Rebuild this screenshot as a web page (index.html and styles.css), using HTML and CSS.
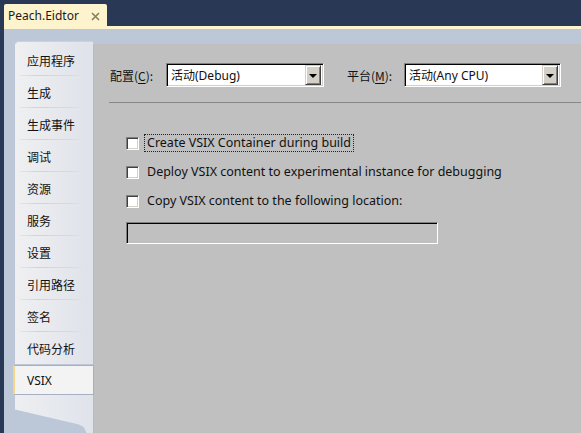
FILE: index.html
```html
<!DOCTYPE html>
<html>
<head>
<meta charset="utf-8">
<link rel="stylesheet" href="styles.css">
</head>
<body>
<div class="window">
  <div class="tabbar">
    <div class="doctab">
      <span class="tab-title">Peach.Eidtor</span>
      <svg class="tab-close" width="9" height="9" viewBox="0 0 9 9"><path d="M1 1 L8 8 M8 1 L1 8" stroke="#8b7d5e" stroke-width="1.6" fill="none"/></svg>
    </div>
  </div>
  <div class="tabline"></div>
  <div class="workspace">
    <nav class="side">
      <div class="side-top"></div>
      <ul class="side-items">
        <li class="side-item">应用程序</li>
        <li class="side-item">生成</li>
        <li class="side-item">生成事件</li>
        <li class="side-item">调试</li>
        <li class="side-item">资源</li>
        <li class="side-item">服务</li>
        <li class="side-item">设置</li>
        <li class="side-item">引用路径</li>
        <li class="side-item">签名</li>
        <li class="side-item">代码分析</li>
        <li class="side-item selected">VSIX</li>
      </ul>
      <div class="side-rest"></div>
      <div class="side-tail"></div>
    </nav>
    <main class="page">
      <div class="config-row">
        <span class="field-label lbl-config">配置(<u>C</u>):</span>
        <div class="combo combo-config">
          <span class="combo-text">活动(Debug)</span>
          <span class="combo-btn"><span class="arrow"></span></span>
        </div>
        <span class="field-label lbl-platform">平台(<u>M</u>):</span>
        <div class="combo combo-platform">
          <span class="combo-text">活动(Any CPU)</span>
          <span class="combo-btn"><span class="arrow"></span></span>
        </div>
      </div>
      <div class="sep"></div>
      <div class="checks">
        <label class="check-row"><span class="box"></span><span class="check-text focused">Create VSIX Container during build</span></label>
        <label class="check-row"><span class="box"></span><span class="check-text">Deploy VSIX content to experimental instance for debugging</span></label>
        <label class="check-row"><span class="box"></span><span class="check-text">Copy VSIX content to the following location:</span></label>
      </div>
      <div class="textbox"></div>
    </main>
  </div>
</div>
</body>
</html>
```

FILE: styles.css
```css
* { box-sizing: border-box; }
html, body { margin: 0; padding: 0; }
body {
  width: 581px;
  height: 433px;
  overflow: hidden;
  background: #293955;
  font-family: "Noto Sans", "Noto Sans CJK SC", sans-serif;
  font-size: 12px;
  color: #000;
}
.window {
  margin-left: 4px;
  height: 433px;
  display: flex;
  flex-direction: column;
}
.tabbar {
  height: 26px;
  padding-top: 4px;
  display: flex;
}
.doctab {
  width: 103px;
  height: 22px;
  background: #fdf3cd;
  border-radius: 2px 2px 0 0;
  display: flex;
  align-items: center;
  padding-left: 4px;
  padding-top: 1px;
}
.tab-title {
  font-family: "Noto Sans", sans-serif;
  font-size: 12px;
  color: #1b1b1b;
  flex: 1;
}
.tab-close { margin-right: 7px; margin-top: 2px; }
.tabline {
  height: 3px;
  background: #fdf3cd;
}
.workspace {
  flex: 1;
  background: #bcc7d8;
  display: flex;
  padding-top: 12px;
  padding-left: 11px;
}
.side {
  width: 78px;
  display: flex;
  flex-direction: column;
  position: relative;
}
.side-top {
  height: 3px;
  border-radius: 4px 0 0 0;
  background: linear-gradient(to right, #eeeff2, #dfe3ea);
  border-top: 1px solid #ccd2dc;
  border-left: 1px solid #ccd2dc;
}
.side-items {
  list-style: none;
  margin: 0;
  padding: 0;
}
.side-item {
  height: 32px;
  padding-left: 12px;
  display: flex;
  align-items: center;
  font-family: "Noto Sans CJK SC", sans-serif;
  font-size: 12px;
  color: #111;
  background: linear-gradient(to right, #f0f0f2, #dee2e9);
  position: relative;
}
.side-item::after {
  content: "";
  position: absolute;
  left: 4px;
  right: 8px;
  bottom: 0;
  height: 1px;
  background: linear-gradient(to right, rgba(205,208,214,0.3), #cfd3da 30%, #d6dae1 80%, rgba(220,224,232,0));
}
.side-item:nth-child(10)::after { display: none; }
.side-item.selected {
  margin-left: -2px;
  margin-right: -1px;
  margin-top: 1px;
  height: 30px;
  background: #f3f3f3;
  border: 1px solid #a7b0c0;
  border-left: 2px solid #f3d58c;
  padding-left: 12px;
  font-family: "Noto Sans", sans-serif;
  font-size: 12px;
}
.side-item.selected::after { display: none; }
.side-rest {
  height: 8px;
  background: linear-gradient(to right, #eeeff2, #dfe3ea);
}
.side-tail {
  flex: 1;
  background: linear-gradient(to right, #eeeff2, #dfe3ea);
  clip-path: polygon(0 0, 100% 0, 100% 100%, 92% 100%, 88% 80%, 82% 72%, 0 22%);
}
.page {
  flex: 1;
  margin-top: 3px;
  background: #c0c0c0;
  padding-left: 15px;
  border-left: 1px solid #b4bcc8;
}
.config-row {
  margin-top: 19px;
  height: 24px;
  display: flex;
  align-items: center;
}
.field-label {
  font-family: "Noto Sans CJK SC", sans-serif;
  font-size: 12px;
  color: #111;
}
.field-label u { text-decoration-thickness: 1px; text-underline-offset: 2px; }
.lbl-config { width: 57px; padding-left: 1px; }
.lbl-platform { width: 57px; margin-left: 23px; }
.combo {
  height: 24px;
  background: #fff;
  border: 1px solid;
  border-color: #808080 #ffffff #ffffff #808080;
  box-shadow: inset 1px 1px 0 #000, inset -1px -1px 0 #d4d0c8;
  display: flex;
  align-items: center;
  padding: 2px;
}
.combo-config { width: 158px; }
.combo-platform { width: 157px; }
.combo-text {
  flex: 1;
  padding-left: 2px;
  font-family: "Noto Sans", "Noto Sans CJK SC", sans-serif;
  font-size: 12px;
  color: #111;
}
.combo-btn {
  width: 16px;
  height: 20px;
  background: #d4d0c8;
  border: 1px solid;
  border-color: #d4d0c8 #404040 #404040 #d4d0c8;
  box-shadow: inset 1px 1px 0 #fff, inset -1px -1px 0 #808080;
  display: flex;
  align-items: center;
  justify-content: center;
}
.arrow {
  width: 0;
  height: 0;
  border-left: 4px solid transparent;
  border-right: 4px solid transparent;
  border-top: 4px solid #000;
  margin-top: 1px;
}
.sep {
  margin-top: 15px;
  height: 1px;
  background: #878787;
}
.checks {
  margin-top: 31px;
  padding-left: 17px;
  display: flex;
  flex-direction: column;
  gap: 11px;
}
.check-row {
  height: 18px;
  display: flex;
  align-items: center;
}
.box {
  width: 13px;
  height: 13px;
  background: #fff;
  border: 1px solid;
  border-color: #808080 #ffffff #ffffff #808080;
  box-shadow: inset 1px 1px 0 #404040, inset -1px -1px 0 #d4d0c8;
  margin-right: 5px;
}
.check-text {
  padding: 0 2px;
  border: 1px dotted transparent;
  line-height: 16px;
  font-size: 12.5px;
  color: #111;
}
.check-text.focused { border-color: #222; }
.textbox {
  margin-top: 12px;
  margin-left: 17px;
  width: 312px;
  height: 22px;
  background: #c0c0c0;
  border: 1px solid;
  border-color: #808080 #ffffff #ffffff #808080;
  box-shadow: inset 1px 1px 0 #000;
}
```
